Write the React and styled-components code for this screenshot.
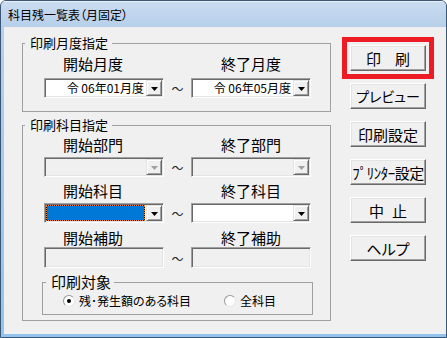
import React from 'react';
import styled, { createGlobalStyle, css } from 'styled-components';

const Global = createGlobalStyle`
  html, body { margin: 0; padding: 0; background: #ffffff; }
  body {
    font-family: "Noto Sans CJK JP", "Noto Sans", sans-serif;
    font-feature-settings: "palt" 1;
    color: #000;
  }
  * { box-sizing: border-box; }
`;

const Window = styled.div`
  width: 447px;
  height: 338px;
  display: flex;
  flex-direction: column;
  border: 1px solid #3b5675;
  border-radius: 6px 6px 0 0;
  overflow: hidden;
  background: #9cc4ec;
`;

const TitleBar = styled.div`
  height: 26px;
  flex: none;
  display: flex;
  align-items: center;
  padding: 2px 0 0 7px;
  background: linear-gradient(#cadcf1, #b7cfea);
  box-shadow: inset 0 1px rgba(255, 255, 255, 0.6);
  font-size: 12px;
  line-height: 16px;
  white-space: nowrap;
`;

const Frame = styled.div`
  flex: 1;
  display: flex;
  padding: 0 0 3px 3px;
  background: linear-gradient(#b7cfea, #92c3ee);
`;

const Client = styled.div`
  flex: 1;
  background: #f0f0f0;
  display: grid;
  grid-template-columns: 309px 76px;
  column-gap: 19px;
  align-items: start;
  align-content: start;
  padding: 9px 0 0 18px;
`;

const LeftCol = styled.div`
  display: flex;
  flex-direction: column;
  gap: 6px;
`;

const Group = styled.fieldset`
  margin: ${p => p.$mt || 0}px 0 0 ${p => p.$ml || 0}px;
  padding: 0;
  min-width: 0;
  width: ${p => p.$w}px;
  border: 1px solid #a0a0a0;
`;

const Legend = styled.legend`
  margin-left: ${p => p.$ml}px;
  padding: 0 ${p => p.$pr}px 0 5px;
  font-size: ${p => p.$size}px;
  line-height: ${p => p.$size + 1}px;
  white-space: nowrap;
`;

const GroupBody = styled.div`
  display: flex;
  flex-direction: column;
  padding: ${p => p.$pad};
`;

const Row = styled.div`
  display: grid;
  grid-template-columns: 120px 27px 120px;
  align-items: center;
  margin-top: ${p => p.$mt || 0}px;
`;

const FieldLabel = styled.div`
  grid-column: ${p => p.$col};
  height: 16px;
  font-size: 15px;
  line-height: 16px;
  white-space: nowrap;
  padding-left: ${p => p.$indent}px;
`;

const sunken = css`
  border: 1px solid;
  border-color: #a0a0a0 #ffffff #ffffff #a0a0a0;
  box-shadow: inset 1px 1px #696969, inset -1px -1px #e3e3e3;
`;

const Combo = styled.div`
  ${sunken};
  width: 120px;
  height: 20px;
  padding: 1px;
  display: flex;
  background: ${p => (p.$disabled ? '#f0f0f0' : '#ffffff')};
`;

const ComboValue = styled.div`
  flex: 1;
  min-width: 0;
  display: flex;
  align-items: center;
  justify-content: flex-end;
  padding-right: 2px;
  font-size: 12px;
  line-height: 16px;
  white-space: nowrap;
`;

const Selection = styled.div`
  flex: 1;
  margin-right: 1px;
  border: 1px dotted #ff8728;
  background: linear-gradient(#0078d7, #0078d7) padding-box, #000000;
`;

const ArrowBtn = styled.span`
  width: 16px;
  flex: none;
  display: flex;
  align-items: center;
  justify-content: center;
  padding-top: 1px;
  background: #f0f0f0;
  border: 1px solid;
  border-color: #e3e3e3 #696969 #696969 #e3e3e3;
  box-shadow: inset 1px 1px #ffffff, inset -1px -1px #a0a0a0;
`;

const Tilde = styled.span`
  display: flex;
  align-items: center;
  justify-content: center;
  padding-top: 2px;
  font-size: 12px;
  line-height: 1;
  color: #222;
`;

const TextBox = styled.div`
  ${sunken};
  width: 120px;
  height: 21px;
  background: #f0f0f0;
`;

const RadioRow = styled.div`
  display: flex;
  align-items: center;
  height: 17px;
  padding-left: 20px;
  font-size: 12px;
  line-height: 17px;
  white-space: nowrap;
`;

const RadioOpt = styled.label`
  display: flex;
  align-items: center;
  gap: 4px;
  margin-right: ${p => p.$mr || 0}px;
`;

const RadioDot = styled.span`
  position: relative;
  width: 12px;
  height: 12px;
  border-radius: 50%;
  background: #ffffff;
  border: 1px solid;
  border-color: #979797 #e6e6e6 #e6e6e6 #979797;
  &::after {
    content: '';
    display: ${p => (p.$checked ? 'block' : 'none')};
    position: absolute;
    left: 3px;
    top: 3px;
    width: 4px;
    height: 4px;
    border-radius: 50%;
    background: #000;
  }
`;

const RightCol = styled.div`
  display: flex;
  flex-direction: column;
  gap: 12px;
  padding-top: 9px;
`;

const Btn = styled.button`
  width: 76px;
  height: 26px;
  margin: 0;
  padding: 0;
  display: flex;
  align-items: center;
  justify-content: center;
  font-family: "Noto Sans CJK JP", "Noto Sans", sans-serif;
  font-feature-settings: "palt" 1;
  font-size: ${p => p.$size || 15}px;
  letter-spacing: ${p => p.$ls || 0}px;
  line-height: 1;
  color: #000;
  background: #f0f0f0;
  border: 1px solid;
  border-color: #ffffff #696969 #696969 #ffffff;
  box-shadow: inset -1px -1px #a0a0a0, inset 1px 1px #e3e3e3;
  outline: ${p => (p.$highlight ? '5px solid #ed1c24' : 'none')};
  outline-offset: 3px;
  white-space: nowrap;
`;

const Space = styled.span`
  display: inline-block;
  width: ${p => p.$w}px;
`;

const Arrow = ({ disabled }) => (
  <svg width="7" height="4" viewBox="0 0 7 4">
    <polygon points="0,0 7,0 3.5,4" fill={disabled ? '#a0a0a0' : '#000'} />
  </svg>
);

const Dropdown = ({ value, disabled, selected }) => (
  <Combo $disabled={disabled}>
    {selected ? <Selection /> : <ComboValue>{value}</ComboValue>}
    <ArrowBtn>
      <Arrow disabled={disabled} />
    </ArrowBtn>
  </Combo>
);

const Labels = ({ a, b, mt }) => (
  <Row $mt={mt}>
    <FieldLabel $col={1} $indent={19}>{a}</FieldLabel>
    <FieldLabel $col={3} $indent={30}>{b}</FieldLabel>
  </Row>
);

export default function App() {
  return (
    <>
      <Global />
      <Window>
        <TitleBar>科目残一覧表（月固定）</TitleBar>
        <Frame>
          <Client>
            <LeftCol>
              <Group $w={309}>
                <Legend $ml={2} $pr={4} $size={13}>印刷月度指定</Legend>
                <GroupBody $pad="6px 0 13px 21px">
                  <Labels a="開始月度" b="終了月度" />
                  <Row $mt={6}>
                    <Dropdown value="令 06年01月度" />
                    <Tilde>～</Tilde>
                    <Dropdown value="令 06年05月度" />
                  </Row>
                </GroupBody>
              </Group>

              <Group $w={309}>
                <Legend $ml={2} $pr={4} $size={13}>印刷科目指定</Legend>
                <GroupBody $pad="5px 0 5px 21px">
                  <Labels a="開始部門" b="終了部門" />
                  <Row $mt={4}>
                    <Dropdown disabled />
                    <Tilde>～</Tilde>
                    <Dropdown disabled />
                  </Row>
                  <Labels a="開始科目" b="終了科目" mt={6} />
                  <Row $mt={4}>
                    <Dropdown selected />
                    <Tilde>～</Tilde>
                    <Dropdown />
                  </Row>
                  <Labels a="開始補助" b="終了補助" mt={7} />
                  <Row $mt={1}>
                    <TextBox />
                    <Tilde>～</Tilde>
                    <TextBox />
                  </Row>
                  <Group $w={271} $ml={-2} $mt={6}>
                    <Legend $ml={3} $pr={3} $size={15}>印刷対象</Legend>
                    <GroupBody $pad="2px 0 5px 0">
                      <RadioRow>
                        <RadioOpt $mr={33}>
                          <RadioDot $checked />
                          残･発生額のある科目
                        </RadioOpt>
                        <RadioOpt>
                          <RadioDot />
                          全科目
                        </RadioOpt>
                      </RadioRow>
                    </GroupBody>
                  </Group>
                </GroupBody>
              </Group>
            </LeftCol>

            <RightCol>
              <Btn $highlight>印<Space $w={14} />刷</Btn>
              <Btn $size={14}>プレビュー</Btn>
              <Btn>印刷設定</Btn>
              <Btn $ls={-0.5}>ﾌﾟﾘﾝﾀｰ設定</Btn>
              <Btn>中<Space $w={8} />止</Btn>
              <Btn>ヘルプ</Btn>
            </RightCol>
          </Client>
        </Frame>
      </Window>
    </>
  );
}
